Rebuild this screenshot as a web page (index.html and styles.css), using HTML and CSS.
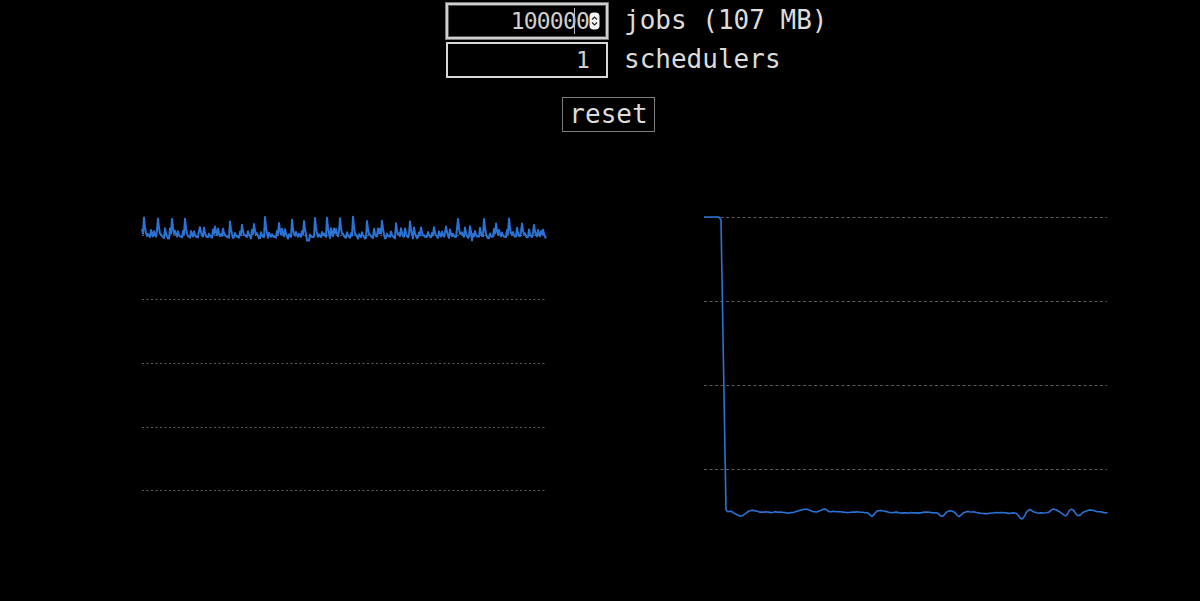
FILE: index.html
```html
<!DOCTYPE html>
<html lang="en">
<head>
<meta charset="utf-8">
<title>scheduler</title>
<link rel="stylesheet" href="styles.css">
</head>
<body>
<main class="app">
  <section class="controls">
    <div class="field">
      <div class="num-wrap focused">
        <input class="num" type="number" value="100000" aria-label="jobs">
        <span class="caret"></span>
        <span class="spinner"><svg viewBox="0 0 11 18" width="11" height="18"><rect x="0.5" y="0.5" width="10" height="17" rx="4" fill="#f4f4f4"/><path d="M3 7.5 L5.5 5 L8 7.5" fill="none" stroke="#222" stroke-width="1.2"/><path d="M3 10.5 L5.5 13 L8 10.5" fill="none" stroke="#222" stroke-width="1.2"/></svg></span>
      </div>
      <label class="label">jobs (107 MB)</label>
    </div>
    <div class="field">
      <div class="num-wrap">
        <input class="num" type="number" value="1" aria-label="schedulers">
      </div>
      <label class="label">schedulers</label>
    </div>
    <div class="actions">
      <button class="btn" type="button">reset</button>
    </div>
  </section>
  <section class="charts">
    <svg class="chart" id="left" width="404" height="400" viewBox="0 0 404 400">
      <g class="grid">
        <line x1="0" x2="403" y1="75.5" y2="75.5"/>
        <line x1="0" x2="403" y1="139.5" y2="139.5"/>
        <line x1="0" x2="403" y1="203.5" y2="203.5"/>
        <line x1="0" x2="403" y1="267.5" y2="267.5"/>
        <line x1="0" x2="403" y1="330.5" y2="330.5"/>
      </g>
      <path class="series thick" id="left-series" d=""/>
    </svg>
    <svg class="chart" id="right" width="404" height="400" viewBox="0 0 404 400">
      <g class="grid right-grid">
        <line x1="0" x2="403" y1="57.5" y2="57.5"/>
        <line x1="0" x2="403" y1="141.5" y2="141.5"/>
        <line x1="0" x2="403" y1="225.5" y2="225.5"/>
        <line x1="0" x2="403" y1="309.5" y2="309.5"/>
      </g>
      <path class="series" id="right-series" d=""/>
    </svg>
  </section>
</main>
<script src="script.js"></script>
</body>
</html>
```

FILE: styles.css
```css
html, body {
  margin: 0;
  padding: 0;
  background: #000;
  color: #dcdcdc;
  font-family: "DejaVu Sans Mono", "Liberation Mono", monospace;
}

.app {
  width: 1200px;
  height: 601px;
  overflow: hidden;
}

.controls {
  padding-top: 3px;
  display: flex;
  flex-direction: column;
  gap: 3px;
}

.field {
  display: flex;
  align-items: center;
  gap: 16px;
  padding-left: 446px;
  height: 36px;
}

.num-wrap {
  position: relative;
  width: 162px;
  height: 36px;
}

.num {
  box-sizing: border-box;
  width: 162px;
  height: 36px;
  margin: 0;
  padding: 0 17px 1px 4px;
  background: #000;
  color: #cfcfcf;
  border: 2px solid #d8d8d8;
  border-radius: 0;
  font-family: "DejaVu Sans Mono", "Liberation Mono", monospace;
  font-size: 23px;
  letter-spacing: -0.8px;
  text-align: right;
  outline: none;
  -moz-appearance: textfield;
}

.num::-webkit-outer-spin-button,
.num::-webkit-inner-spin-button {
  -webkit-appearance: none;
  margin: 0;
}

.focused .num {
  border: 2px solid #cfcfcf;
  box-shadow: 0 0 0 1px #7a7a7a, inset 0 0 0 1px #555;
}

.caret {
  position: absolute;
  left: 128px;
  top: 5px;
  width: 1px;
  height: 26px;
  background: #bbb;
}

.spinner {
  position: absolute;
  left: 143px;
  top: 9px;
  width: 11px;
  height: 18px;
  line-height: 0;
}

.label {
  font-size: 26px;
  line-height: 36px;
  color: #dcdcdc;
  white-space: pre;
  margin-top: -3px;
}

.actions {
  padding-left: 562px;
  margin-top: 16px;
}

.btn {
  box-sizing: border-box;
  width: 93px;
  height: 35px;
  margin: 0;
  padding: 0;
  background: #000;
  color: #dcdcdc;
  border: 1px solid #7d7d7d;
  border-radius: 0;
  font-family: "DejaVu Sans Mono", "Liberation Mono", monospace;
  font-size: 26px;
  line-height: 33px;
}

.charts {
  display: flex;
  gap: 158px;
  padding-left: 142px;
  margin-top: 28px;
}

.chart {
  display: block;
  overflow: visible;
}

.grid line {
  stroke: #5a5a5a;
  stroke-width: 1;
  stroke-dasharray: 2 2.5;
}

.right-grid line {
  stroke-dasharray: 3 2.5;
}

.series {
  fill: none;
  stroke: #2a72d4;
  stroke-width: 1.6;
  stroke-linejoin: round;
}

.series.thick {
  stroke-width: 2;
}
```

FILE: script.js
```js
(function () {
  var seed = 12345;
  function rnd() {
    seed = (seed * 1103515245 + 12345) & 0x7fffffff;
    return seed / 0x7fffffff;
  }

  // Left chart: baseline with periodic spikes (local coords: page y - 160)
  var base = 77.5;
  var ys = [];
  var n = 405;
  for (var i = 0; i < n; i++) {
    ys.push(base + (rnd() - 0.5) * 2.4);
  }
  // small bumps
  for (var s = 0; s < n; s += 2 + Math.floor(rnd() * 4)) {
    var hs = 3 + rnd() * 7;
    ys[s] = Math.min(ys[s], base - hs);
    if (s + 1 < n) ys[s + 1] = Math.min(ys[s + 1], base - hs * 0.45);
    if (s + 2 < n) ys[s + 2] = Math.min(ys[s + 2], base - hs * 0.15);
  }
  // big spikes
  var x = 2;
  while (x < n - 2) {
    var h = 10 + rnd() * 8;
    if (rnd() < 0.3) h = 16 + rnd() * 5;
    ys[x] = base - h;
    ys[x + 1] = base - h * 0.5;
    ys[x + 2] = base - h * 0.2;
    x += 11 + Math.floor(rnd() * 5);
  }
  // a couple of dips
  [165, 166, 167, 330].forEach(function (d) { ys[d] = base + 3; });
  var d1 = "M0 " + ys[0].toFixed(1);
  for (var j = 1; j < n; j++) d1 += " L" + j + " " + ys[j].toFixed(1);
  document.getElementById("left-series").setAttribute("d", d1);

  // Right chart: flat top, sharp drop, then noisy floor
  var pts = [[0, 57], [15, 57], [17, 60], [22, 350]];
  var dips = [
    [27, -1.5, 2], [37, 4, 4], [48, -1.5, 4], [100, -2, 4], [120, -2.5, 3], [168, 4, 2],
    [176, -2, 3], [238, 5, 2.5], [247, -1, 3], [255, 5, 2.5],
    [318, 6, 2.5], [326, -3, 3], [350, -3, 3], [362, 4, 2.5],
    [367, -4, 3], [374, 3, 2.5], [385, -2, 3], [392, -1, 4]
  ];
  var walk = 0;
  for (var px = 24; px <= 404; px += 1.5) {
    walk += (rnd() - 0.5) * 0.9;
    walk *= 0.9;
    var y = 352.5 + walk;
    for (var k = 0; k < dips.length; k++) {
      var dx = px - dips[k][0];
      y += dips[k][1] * Math.exp(-(dx * dx) / (2 * dips[k][2] * dips[k][2]));
    }
    pts.push([px, y]);
  }
  var d2 = "M" + pts[0][0] + " " + pts[0][1];
  for (var m = 1; m < pts.length; m++) d2 += " L" + pts[m][0].toFixed(1) + " " + pts[m][1].toFixed(1);
  document.getElementById("right-series").setAttribute("d", d2);
})();
```
